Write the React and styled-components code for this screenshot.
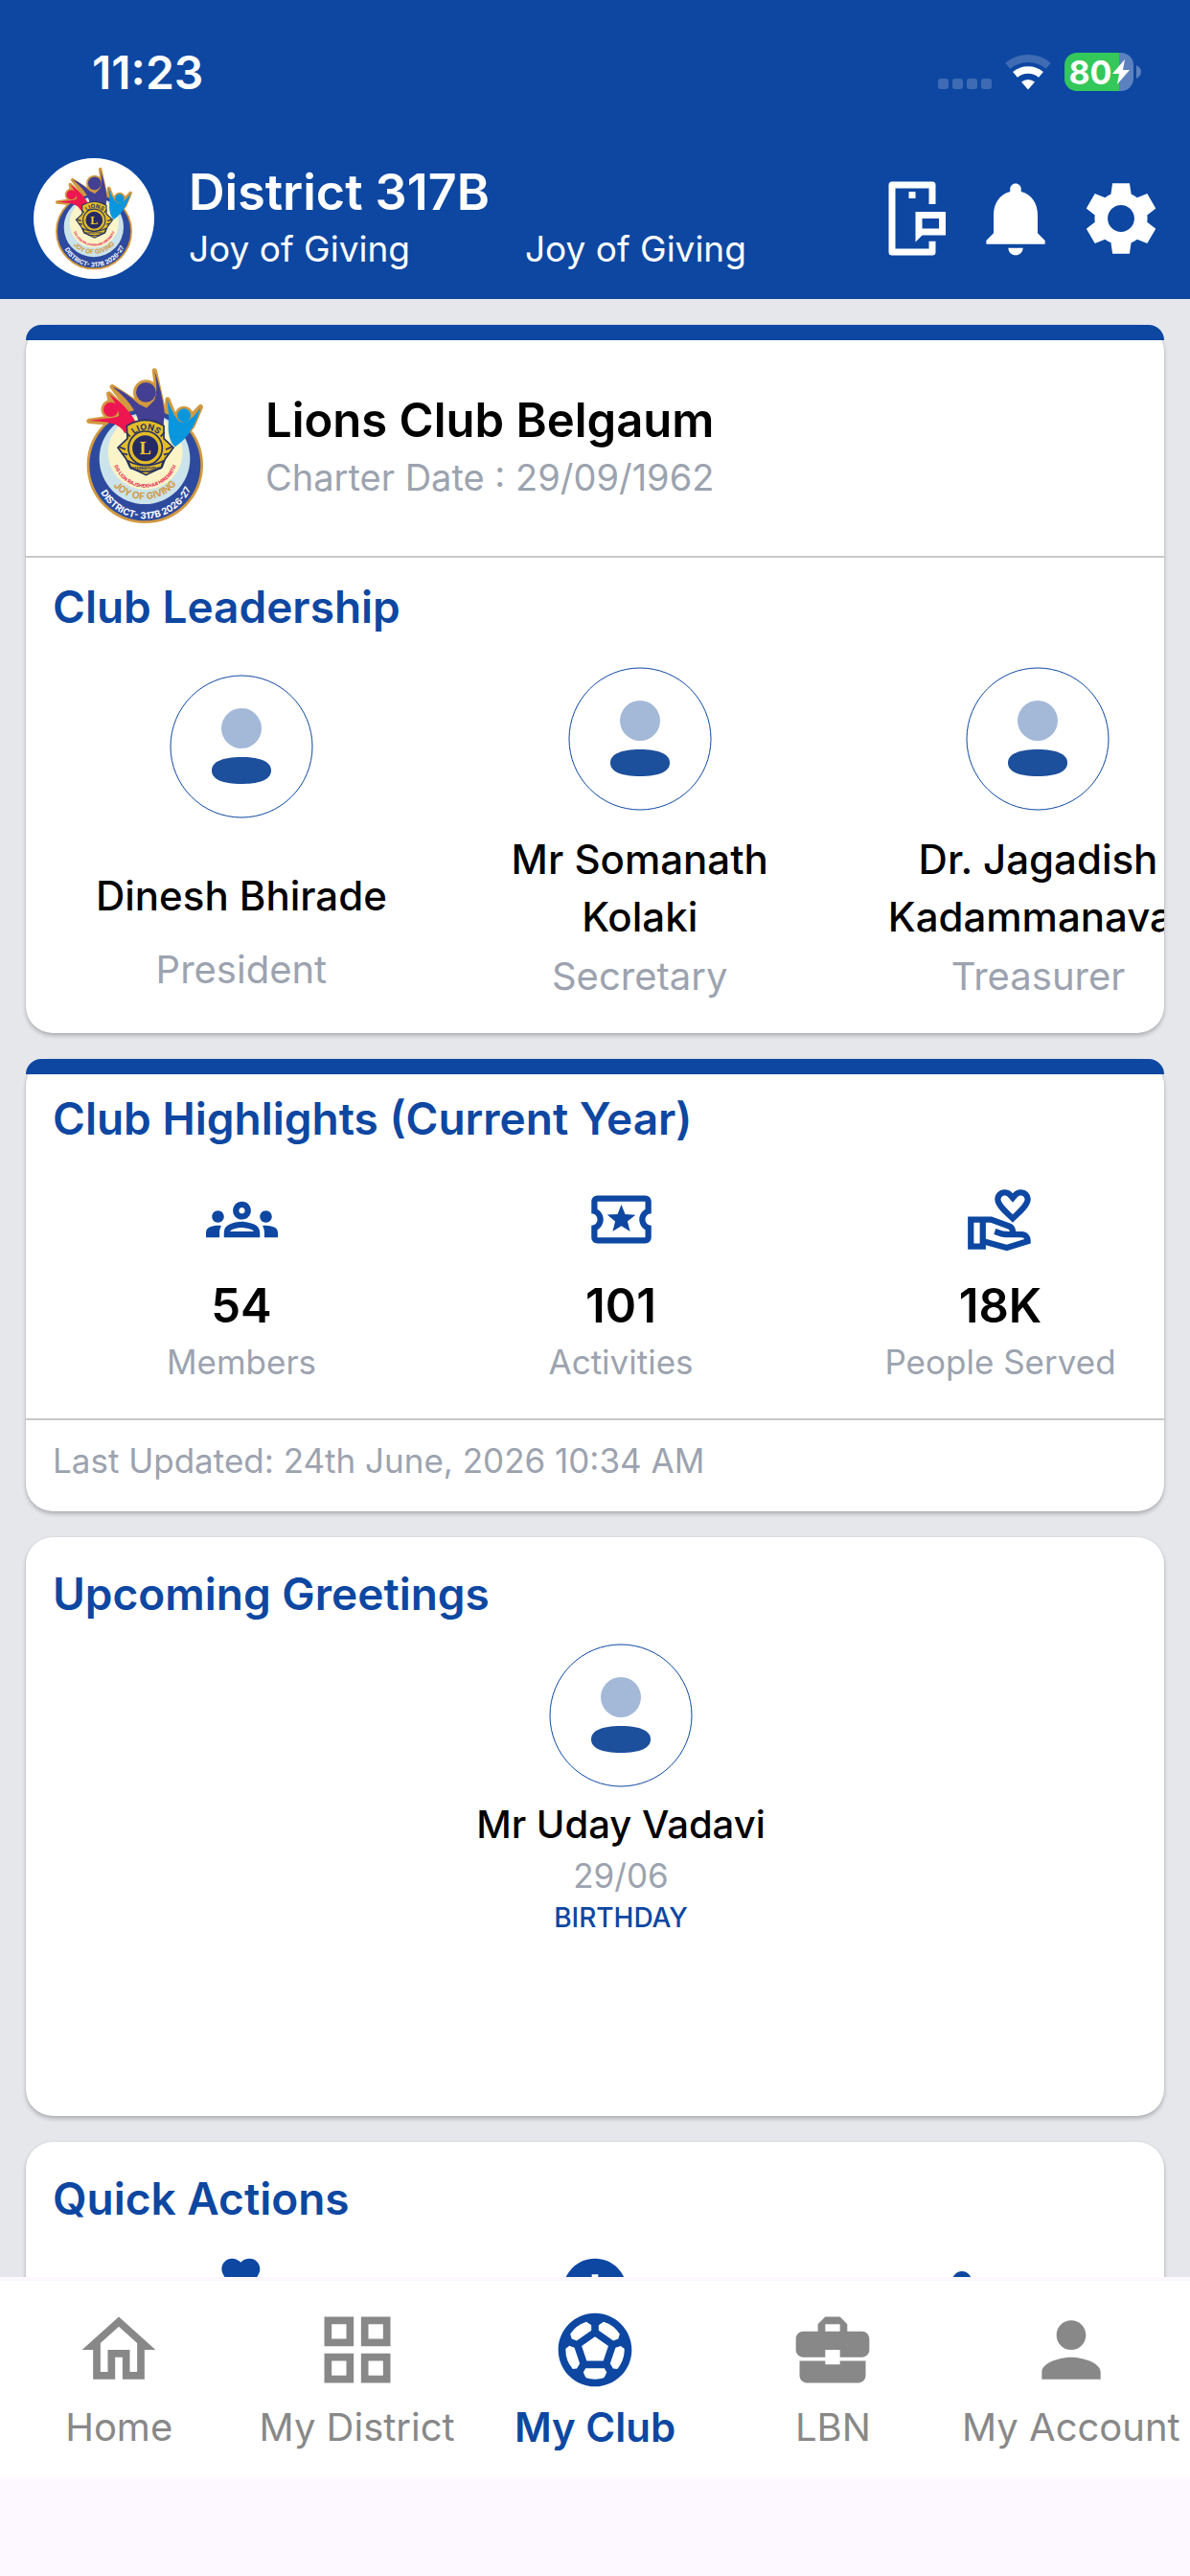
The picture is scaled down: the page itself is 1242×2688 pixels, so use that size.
import React from 'react'
import styled, { createGlobalStyle } from 'styled-components'
import {
  MdOutlineGroups,
  MdOutlineLocalActivity,
  MdOutlineVolunteerActivism,
  MdVolunteerActivism,
  MdInfo,
  MdGroups,
  MdOutlineHome,
  MdOutlineGridView,
  MdSportsSoccer,
  MdBusinessCenter,
  MdPerson,
} from 'react-icons/md'

const leaders = [
  { name: 'Dinesh Bhirade', role: 'President', short: true },
  { name: 'Mr Somanath Kolaki', role: 'Secretary' },
  { name: 'Dr. Jagadish Kadammanavar', role: 'Treasurer' },
]

const stats = [
  { icon: MdOutlineGroups, value: '54', label: 'Members' },
  { icon: MdOutlineLocalActivity, value: '101', label: 'Activities' },
  { icon: MdOutlineVolunteerActivism, value: '18K', label: 'People Served' },
]

const actions = [
  { icon: MdVolunteerActivism, label: 'Donate' },
  { icon: MdInfo, label: 'About' },
  { icon: MdGroups, label: 'Members' },
]

const tabs = [
  { icon: MdOutlineHome, label: 'Home' },
  { icon: MdOutlineGridView, label: 'My District' },
  { icon: MdSportsSoccer, label: 'My Club', active: true },
  { icon: MdBusinessCenter, label: 'LBN' },
  { icon: MdPerson, label: 'My Account' },
]

function ClubLogo({ id, height }) {
  return (
    <svg height={height} viewBox="60 38 372 492" role="img" aria-label="District 317B logo">
      <defs>
        <path id={id + '-outer'} d="M97 403 A157 157 0 0 0 400 391" />
        <path id={id + '-joy'} d="M139 400 A132 132 0 0 0 354 394" />
        <path id={id + '-name'} d="M145 312 A102 102 0 0 0 351 312" />
        <path id={id + '-lions'} d="M204 262 A54 54 0 0 1 298 262" />
      </defs>
      <g fill="#d2993f" stroke="#d2993f" strokeWidth="16" strokeLinejoin="round">
        <circle cx="247" cy="345" r="174" />
        <circle cx="250" cy="118" r="32" />
        <circle cx="140" cy="171" r="23" />
        <circle cx="369" cy="189" r="21" />
        <path d="M277 50 L308 190 L320 240 L220 200 L145 100 L205 140 L250 160 L288 130Z" />
        <path d="M134 122 L186 172 L222 214 L184 246 L152 214 L72 207 L150 196Z" />
        <path d="M318 140 L340 196 L372 214 L421 163 L396 222 L341 286 L316 240Z" />
      </g>
      <circle cx="247" cy="345" r="174" fill="#2d4a9f" />
      <circle cx="246" cy="325" r="142" fill="#cbe3ea" />
      <circle cx="248" cy="305" r="117" fill="#fbf4c8" />
      <path d="M277 50 C292 92 302 134 308 178 L304 234 L228 232 C232 196 206 146 145 100 C178 110 202 132 228 154 L252 166 L276 142 C288 112 282 80 277 50Z" fill="#433f93" />
      <circle cx="250" cy="117" r="31" fill="#433f93" />
      <path d="M134 122 C166 144 192 166 216 206 L184 246 C172 222 150 208 72 207 C108 198 140 202 166 192 C164 166 150 142 134 122Z" fill="#ee1650" />
      <circle cx="140" cy="171" r="23" fill="#ee1650" />
      <path d="M316 136 C324 160 334 182 350 204 C362 222 400 202 421 163 C412 206 384 260 341 288 C318 266 318 226 322 196Z" fill="#0a96dd" />
      <circle cx="369" cy="189" r="21" fill="#0a96dd" />
      <g stroke="#26315f" strokeWidth="5">
        <path d="M190 222 Q248 186 306 222 L306 262 L336 290 L310 326 L300 352 L250 376 L200 352 L188 326 L162 290 L192 262Z" fill="#e3bc28" />
        <circle cx="248" cy="292" r="53" fill="#e3bc28" />
        <circle cx="248" cy="292" r="43" fill="#262a63" stroke="#e3bc28" />
        <path d="M194 332 Q248 360 304 332 L298 352 Q248 378 202 352Z" fill="#e3bc28" />
        <path d="M166 288 L186 296 M174 308 L192 312 M332 288 L312 296 M324 308 L306 312 M188 242 L200 256 M308 242 L296 256" />
      </g>
      <LogoText x="248" y="311" fontSize="54" fontFamily="Liberation Serif, serif" fill="#f0ca2d" textAnchor="middle">
        L
      </LogoText>
      <LogoText fontSize="27" fill="#26315f" textAnchor="middle">
        <textPath href={'#' + id + '-lions'} startOffset="50%">LIONS</textPath>
      </LogoText>
      <LogoText x="249" y="358" fontSize="12" fill="#26315f" textAnchor="middle">
        INTERNATIONAL
      </LogoText>
      <LogoText fontSize="15" fill="#e6204f" textAnchor="middle">
        <textPath href={'#' + id + '-name'} startOffset="50%">DG LION RAJSHEKHAR HIREMATH</textPath>
      </LogoText>
      <LogoText fontSize="30" fill="#d2993f" textAnchor="middle">
        <textPath href={'#' + id + '-joy'} startOffset="50%">JOY OF GIVING</textPath>
      </LogoText>
      <LogoText fontSize="29" fill="#ffffff" textAnchor="middle">
        <textPath href={'#' + id + '-outer'} startOffset="50%">DISTRICT- 317B 2026-27</textPath>
      </LogoText>
    </svg>
  )
}

function Avatar() {
  return (
    <svg width="150" height="150" viewBox="0 0 150 150" aria-hidden="true">
      <circle cx="75" cy="75" r="74" fill="none" stroke="#0d47a1" strokeWidth="1" />
      <circle cx="75" cy="56" r="21" fill="#a4b8d8" />
      <path d="M44 100 C44 91 55 86 75 86 S106 91 106 100 S95 114 75 114 S44 109 44 100Z" fill="#1c4f9c" />
    </svg>
  )
}

function App() {
  return (
    <Screen>
      <GlobalStyle />
      <Header>
        <StatusBar>
          <Time>11:23</Time>
          <Signals>
            <svg width="56" height="36" viewBox="0 0 56 36" fill="#3e6bb4">
              <rect x="0" y="25" width="11" height="11" rx="3" />
              <rect x="15" y="25" width="11" height="11" rx="3" />
              <rect x="30" y="25" width="11" height="11" rx="3" />
              <rect x="45" y="25" width="11" height="11" rx="3" />
            </svg>
            <svg width="48" height="37" viewBox="0 0 48 37" fill="none">
              <path d="M2.8 11.7 A33 33 0 0 1 45.2 11.7" stroke="#3e6bb4" strokeWidth="8" />
              <path d="M10.5 20.9 A21 21 0 0 1 37.5 20.9" stroke="#fff" strokeWidth="7.5" />
              <path d="M17 28.6 A11 11 0 0 1 31 28.6 L24 36.5Z" fill="#fff" />
            </svg>
            <BatteryWrap>
              <Battery>
                80
                <svg width="18" height="26" viewBox="0 0 18 26" fill="#fff">
                  <path d="M13 0 L0 15 H7 L5 26 L18 11 H11Z" />
                </svg>
              </Battery>
              <svg width="5" height="14" viewBox="0 0 5 14">
                <path d="M0 0 Q5 3 5 7 T0 14Z" fill="#5b81bf" />
              </svg>
            </BatteryWrap>
          </Signals>
        </StatusBar>
        <TopBar>
          <LogoCircle>
            <ClubLogo id="top" height="108" />
          </LogoCircle>
          <Heading>
            <DistrictName>District 317B</DistrictName>
            <Taglines>
              <span>Joy of Giving</span>
              <span>Joy of Giving</span>
            </Taglines>
          </Heading>
          <HeaderButtons>
            <IconButton aria-label="Messages">
              <svg width="84" height="84" viewBox="0 0 24 24">
                <path d="M18 7.7V2H6V22H18V18.8" fill="none" stroke="#fff" strokeWidth="2" strokeLinejoin="round" />
                <path d="M11 4H13V6H11Z" fill="#fff" />
                <path d="M13 10H22V17H15L13 19ZM15 12V15H20V12Z" fill="#fff" fillRule="evenodd" />
              </svg>
            </IconButton>
            <IconButton aria-label="Notifications">
              <svg width="92" height="92" viewBox="0 0 24 24" fill="#fff">
                <path d="M12 22c1.1 0 2-.9 2-2h-4c0 1.1.9 2 2 2zm6-6v-5c0-3.07-1.63-5.64-4.5-6.32V4c0-.83-.67-1.5-1.5-1.5s-1.5.67-1.5 1.5v.68C7.64 5.36 6 7.92 6 11v5l-2 2v1h16v-1l-2-2z" />
              </svg>
            </IconButton>
            <IconButton aria-label="Settings">
              <svg width="88" height="88" viewBox="0 0 24 24" fill="#fff">
                <path d="M19.44 12.99l-.01.02c.04-.33.08-.67.08-1.01 0-.34-.03-.66-.07-.99l.01.02 2.44-1.92-2.43-4.22-2.87 1.16.01.01c-.52-.4-1.09-.74-1.71-1h.01L14.44 2H9.57l-.44 3.07h.01c-.62.26-1.19.6-1.71 1l.01-.01-2.88-1.17-2.44 4.22 2.44 1.92.01-.02c-.04.33-.07.65-.07.99 0 .34.03.68.08 1.01l-.01-.02-2.1 1.65-.33.26 2.43 4.2 2.88-1.15-.02-.04c.53.41 1.1.75 1.73 1.01h-.03L9.58 22h4.85s.03-.18.06-.42l.38-2.65h-.01c.62-.26 1.2-.6 1.73-1.01l-.02.04 2.88 1.15 2.43-4.2s-.14-.12-.33-.26l-2.11-1.66zM12 15.8c-2.1 0-3.8-1.7-3.8-3.8s1.7-3.8 3.8-3.8 3.8 1.7 3.8 3.8-1.7 3.8-3.8 3.8z" />
              </svg>
            </IconButton>
          </HeaderButtons>
        </TopBar>
      </Header>

      <Main>
        <Card>
          <CardBar />
          <ClubRow>
            <ClubLogo id="club" height="164" />
            <div>
              <ClubName>Lions Club Belgaum</ClubName>
              <CharterDate>Charter Date : 29/09/1962</CharterDate>
            </div>
          </ClubRow>
          <Leadership>
            <SectionTitle>Club Leadership</SectionTitle>
            <LeaderList>
              {leaders.map((leader) => (
                <Leader key={leader.role}>
                  <Avatar />
                  <LeaderName $short={leader.short}>{leader.name}</LeaderName>
                  <Role>{leader.role}</Role>
                </Leader>
              ))}
            </LeaderList>
          </Leadership>
        </Card>

        <Card>
          <CardBar />
          <SectionTitle>Club Highlights (Current Year)</SectionTitle>
          <StatList>
            {stats.map(({ icon: Icon, value, label }) => (
              <Stat key={label}>
                <Icon size={75} color="#0d47a1" />
                <StatValue>{value}</StatValue>
                <StatLabel>{label}</StatLabel>
              </Stat>
            ))}
          </StatList>
          <Updated>Last Updated: 24th June, 2026 10:34 AM</Updated>
        </Card>

        <Card $plain>
          <SectionTitle>Upcoming Greetings</SectionTitle>
          <Greeting>
            <Avatar />
            <GreetingName>Mr Uday Vadavi</GreetingName>
            <GreetingDate>29/06</GreetingDate>
            <GreetingType>BIRTHDAY</GreetingType>
          </Greeting>
        </Card>

        <Card $plain>
          <SectionTitle>Quick Actions</SectionTitle>
          <ActionGrid>
            {actions.map(({ icon: Icon, label }) => (
              <IconButton key={label} aria-label={label}>
                <Icon size={80} color="#0d47a1" />
              </IconButton>
            ))}
          </ActionGrid>
        </Card>
      </Main>

      <TabBar>
        {tabs.map(({ icon: Icon, label, active }) => (
          <Tab key={label} href="#" $active={active}>
            <Icon size={92} />
            <span>{label}</span>
          </Tab>
        ))}
      </TabBar>
    </Screen>
  )
}

export default App

const GlobalStyle = createGlobalStyle`
  * {
    box-sizing: border-box;
  }
  body {
    margin: 0;
    font-family: Inter, "Liberation Sans", sans-serif;
    background: #fdf7ff;
  }
  h1, h2, p {
    margin: 0;
  }
  svg {
    display: block;
    flex-shrink: 0;
  }
`
const Screen = styled.div`
  display: flex;
  flex-direction: column;
  height: 100vh;
`
const Header = styled.header`
  background: #0d47a1;
  color: #fff;
`
const StatusBar = styled.div`
  display: flex;
  align-items: center;
  justify-content: space-between;
  height: 150px;
  padding: 0 51px 0 96px;
`
const Time = styled.span`
  font-size: 48px;
  font-weight: 600;
`
const Signals = styled.div`
  display: flex;
  align-items: center;
  gap: 14px;
`
const BatteryWrap = styled.div`
  display: flex;
  align-items: center;
  gap: 3px;
`
const Battery = styled.div`
  display: flex;
  align-items: center;
  justify-content: center;
  width: 72px;
  height: 40px;
  border-radius: 13px;
  background: linear-gradient(to right, #34c759 57px, #5b81bf 57px);
  font-size: 34px;
  font-weight: 700;
`
const TopBar = styled.div`
  display: flex;
  align-items: center;
  padding: 15px 28px 21px 35px;
`
const LogoCircle = styled.div`
  display: flex;
  align-items: center;
  justify-content: center;
  width: 126px;
  height: 126px;
  margin-right: 36px;
  border-radius: 50%;
  background: #fff;
`
const Heading = styled.div`
  flex: 1;
`
const DistrictName = styled.h1`
  font-size: 52px;
  font-weight: 600;
  line-height: 64px;
`
const Taglines = styled.div`
  display: flex;
  gap: 120px;
  font-size: 37px;
  line-height: 54px;
  white-space: nowrap;
`
const HeaderButtons = styled.div`
  display: flex;
  align-items: center;
  gap: 20px;
`
const IconButton = styled.button`
  display: flex;
  justify-content: center;
  padding: 0;
  border: none;
  background: none;
  cursor: pointer;
`
const Main = styled.main`
  flex: 1;
  min-height: 0;
  display: flex;
  flex-direction: column;
  gap: 27px;
  padding: 27px 27px 0;
  overflow-y: auto;
  scrollbar-width: none;
  background: #e5e7eb;
`
const Card = styled.section`
  flex-shrink: 0;
  padding-top: ${(props) => (props.$plain ? '13px' : '0')};
  border-radius: 28px;
  background: #fff;
  box-shadow: 0 3px 4px rgba(0, 0, 0, 0.22), 0 0 3px rgba(0, 0, 0, 0.08);
`
const CardBar = styled.div`
  height: 16px;
  border-radius: 16px 16px 0 0;
  background: #0d47a1;
`
const SectionTitle = styled.h2`
  padding: 16px 28px 0;
  color: #0d47a1;
  font-size: 46px;
  font-weight: 600;
  line-height: 60px;
`
const ClubRow = styled.div`
  display: flex;
  align-items: center;
  gap: 64px;
  height: 227px;
  padding: 0 28px 6px 62px;
  border-bottom: 2px solid #c8c8c8;
`
const ClubName = styled.h1`
  font-size: 49px;
  font-weight: 600;
  line-height: 66px;
`
const CharterDate = styled.p`
  color: #9ca3af;
  font-size: 38px;
  line-height: 52px;
`
const Leadership = styled.div`
  padding-top: 5px;
  overflow: hidden;
  border-radius: 0 0 28px 28px;
`
const LeaderList = styled.div`
  display: flex;
  align-items: center;
  width: 100%;
  margin-left: 17px;
  padding: 33px 0 34px;
`
const Leader = styled.div`
  flex: 0 0 35%;
  display: flex;
  flex-direction: column;
  align-items: center;
`
const LeaderName = styled.p`
  width: 330px;
  padding: ${(props) => (props.$short ? '51px 0 22px' : '21px 0 7px')};
  font-size: 42px;
  font-weight: 500;
  line-height: 60px;
  text-align: center;
`
const Role = styled.p`
  color: #9ca3af;
  font-size: 40px;
  line-height: 50px;
`
const StatList = styled.div`
  display: flex;
  padding: 38px 0 37px 27px;
  margin-right: -27px;
`
const Stat = styled.div`
  flex: 1;
  display: flex;
  flex-direction: column;
  align-items: center;
`
const StatValue = styled.p`
  margin-top: 23px;
  font-size: 49px;
  font-weight: 600;
  line-height: 60px;
`
const StatLabel = styled.p`
  margin-top: 6px;
  color: #9ca3af;
  font-size: 35px;
  line-height: 44px;
`
const Updated = styled.p`
  padding: 20px 28px 31px;
  border-top: 2px solid #c8c8c8;
  color: #9ca3af;
  font-size: 35px;
  line-height: 44px;
`
const Greeting = styled.div`
  display: flex;
  flex-direction: column;
  align-items: center;
  padding: 22px 0 189px 54px;
`
const GreetingName = styled.p`
  margin-top: 14px;
  font-size: 40px;
  font-weight: 500;
  line-height: 50px;
`
const GreetingDate = styled.p`
  margin-top: 6px;
  color: #9ca3af;
  font-size: 35px;
  line-height: 44px;
`
const GreetingType = styled.p`
  margin-top: 4px;
  color: #0d47a1;
  font-size: 28px;
  font-weight: 500;
  line-height: 36px;
`
const ActionGrid = styled.div`
  display: grid;
  grid-template-columns: repeat(3, 1fr);
  padding: 26px 19px;
`
const TabBar = styled.nav`
  display: flex;
  height: 312px;
  padding-bottom: 102px;
  border-top: 4px solid #fdf7ff;
  background: #fff;
  background-clip: content-box;
`
const Tab = styled.a`
  flex: 1 1 0;
  min-width: 0;
  display: flex;
  flex-direction: column;
  align-items: center;
  padding-top: 26px;
  color: ${(props) => (props.$active ? '#0d47a1' : '#888')};
  font-size: ${(props) => (props.$active ? '42px' : '40px')};
  font-weight: ${(props) => (props.$active ? 600 : 400)};
  line-height: 50px;
  text-decoration: none;
  white-space: nowrap;

  span {
    margin-top: 10px;
  }
`
const LogoText = styled.text`
  font-weight: 700;
`
